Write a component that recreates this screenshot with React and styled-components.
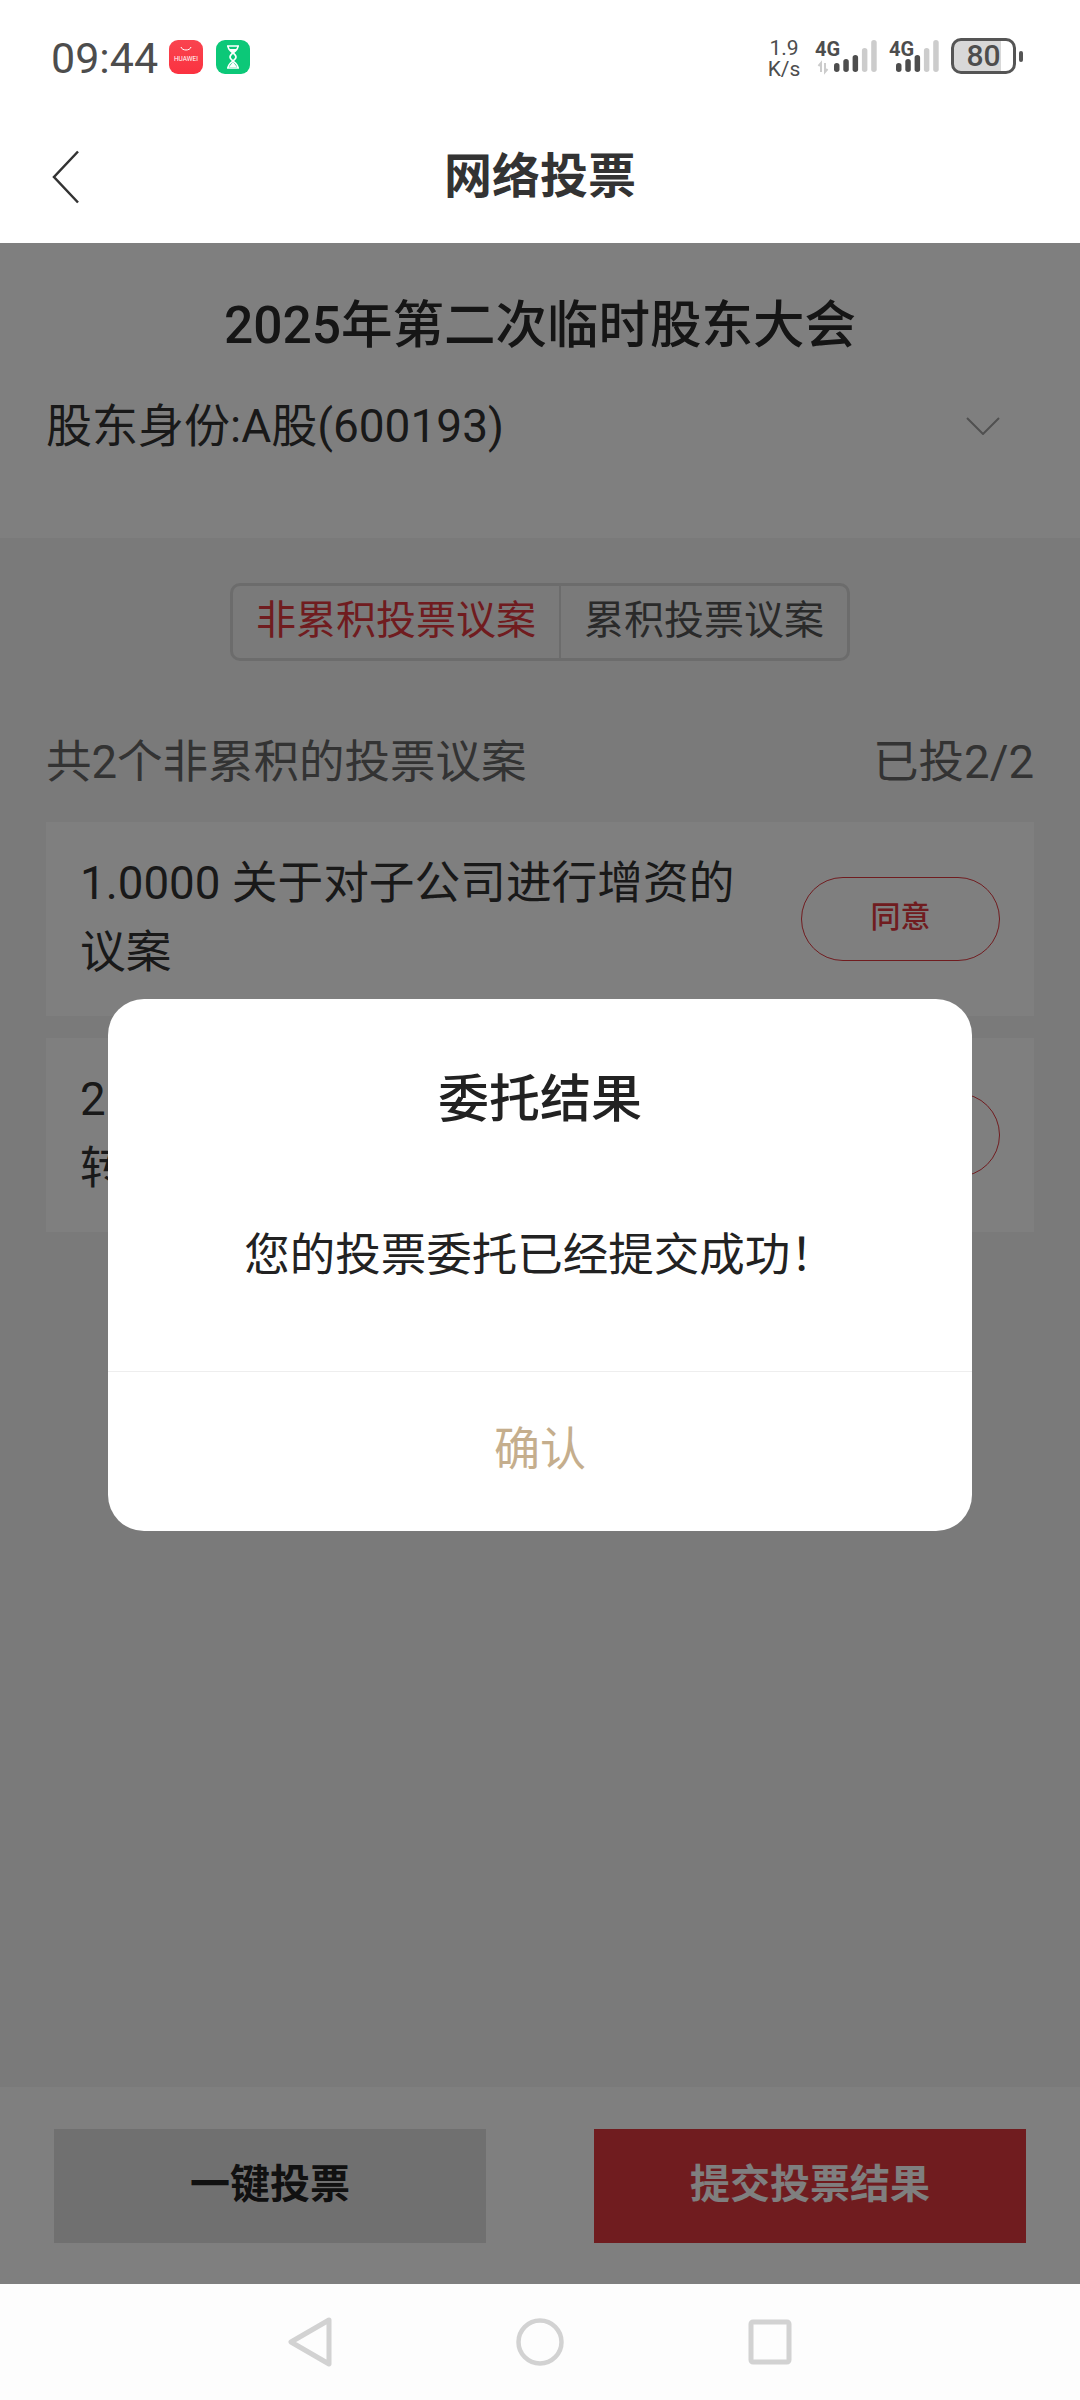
import React from 'react';
import styled, { createGlobalStyle } from 'styled-components';

const GlobalStyle = createGlobalStyle`
  html, body {
    margin: 0;
    padding: 0;
    background: #ffffff;
  }
  * {
    box-sizing: border-box;
  }
`;

const Page = styled.div`
  position: relative;
  width: 1080px;
  height: 2400px;
  display: flex;
  flex-direction: column;
  overflow: hidden;
  background: #f4f4f4;
  font-family: Roboto, "Noto Sans CJK SC", sans-serif;
  color: #333333;
`;

const StatusBar = styled.div`
  height: 92px;
  padding: 38px 64px 0 51px;
  display: flex;
  justify-content: space-between;
  align-items: flex-start;
  background: #ffffff;
`;

const StatusLeft = styled.div`
  display: flex;
  align-items: center;
  height: 40px;
`;

const Clock = styled.span`
  width: 118px;
  font-size: 43px;
  line-height: 40px;
  color: #4d4d4d;
`;

const AppBadge = styled.svg`
  width: 34px;
  height: 34px;
  margin: -3px 13px 0 0;
  display: block;
`;

const StatusRight = styled.div`
  display: flex;
  align-items: flex-start;
`;

const Speed = styled.div`
  width: 40px;
  font-size: 21px;
  line-height: 21px;
  color: #4d4d4d;
  text-align: center;
`;

const Signal = styled.svg`
  display: block;
  height: 40px;
  margin-left: ${props => props.$gap}px;
`;

const Battery = styled.div`
  position: relative;
  width: 65px;
  height: 36px;
  margin-left: 10px;
  border: 3px solid #555555;
  border-radius: 10px;
  background: linear-gradient(90deg, #d8d8d8 80%, #ffffff 80%);
  font-size: 30px;
  line-height: 30px;
  font-weight: 500;
  text-align: center;
  color: #4d4d4d;

  &::after {
    content: '';
    position: absolute;
    top: 10px;
    right: -10px;
    width: 4px;
    height: 11px;
    border-radius: 2px;
    background: #555555;
  }
`;

const Header = styled.div`
  height: 151px;
  padding: 19px 0 0 52px;
  display: flex;
  align-items: center;
  background: #ffffff;
`;

const BackIcon = styled.svg`
  width: 27px;
  height: 54px;
  display: block;
`;

const HeaderTitle = styled.h1`
  margin: 0 0 0 365px;
  font-size: 48px;
  line-height: 60px;
  font-weight: 700;
  color: #333333;
`;

const Meeting = styled.section`
  height: 295px;
  padding: 47px 46px 0;
  background: #ffffff;
`;

const MeetingTitle = styled.h2`
  margin: 0;
  font-size: 51.500px;
  line-height: 72px;
  font-weight: 500;
  text-align: center;
  color: #2a2a2a;
`;

const HolderRow = styled.div`
  margin-top: 34px;
  display: flex;
  justify-content: space-between;
  align-items: center;
  font-size: 46px;
  line-height: 60px;
  color: #333333;
`;

const ChevronDown = styled.svg`
  width: 34px;
  height: 18px;
  margin-right: 34px;
  display: block;
`;

const Proposals = styled.section`
  flex: 1;
  padding: 45px 46px 0;
  display: flex;
  flex-direction: column;
`;

const Tabs = styled.div`
  align-self: center;
  display: flex;
  height: 78px;
  border: 3px solid #d8d8d8;
  border-radius: 10px;
`;

const Tab = styled.div`
  padding: 0 23px;
  font-size: 40px;
  line-height: 70px;
  color: ${props => (props.$active ? '#e1383f' : '#555555')};
  border-left: ${props => (props.$active ? 'none' : '2px solid #d8d8d8')};
`;

const CountRow = styled.div`
  margin-top: 72px;
  display: flex;
  justify-content: space-between;
  font-size: 45.500px;
  line-height: 60px;
  color: #666666;
`;

const Card = styled.div`
  height: 194px;
  margin-top: ${props => (props.$first ? 29 : 22)}px;
  padding: 0 34px;
  display: flex;
  align-items: center;
  background: #ffffff;
`;

const CardText = styled.div`
  flex: 1;
  padding-bottom: 3px;
  font-size: 45.700px;
  line-height: 69px;
  color: #333333;
`;

const AgreeButton = styled.div`
  flex: none;
  width: 199px;
  height: 84px;
  margin-left: 40px;
  border: 1.5px solid #e1383f;
  border-radius: 42px;
  font-size: 30px;
  line-height: 78px;
  font-weight: 500;
  text-align: center;
  color: #e1383f;
`;

const BottomBar = styled.div`
  height: 197px;
  padding: 42px 54px 0;
  display: flex;
  justify-content: space-between;
  align-items: flex-start;
  background: #ffffff;
`;

const ActionButton = styled.div`
  width: 432px;
  height: 114px;
  font-size: 40px;
  line-height: 112px;
  font-weight: 700;
  text-align: center;
  background: ${props => (props.$primary ? '#e1383f' : '#e0e0e0')};
  color: ${props => (props.$primary ? '#ffffff' : '#222222')};
`;

const SystemNav = styled.div`
  height: 116px;
  padding-top: 33px;
  display: flex;
  justify-content: center;
  align-items: flex-start;
  gap: 182px;
  background: #fdfdfd;
`;

const NavIcon = styled.svg`
  width: 48px;
  height: 50px;
  display: block;
`;

const Overlay = styled.div`
  position: absolute;
  top: 243px;
  left: 0;
  right: 0;
  bottom: 116px;
  padding-top: 3px;
  display: flex;
  align-items: center;
  justify-content: center;
  background: rgba(0, 0, 0, 0.5);
`;

const Dialog = styled.div`
  width: 864px;
  height: 532px;
  display: flex;
  flex-direction: column;
  border-radius: 36px;
  background: #ffffff;
`;

const DialogTitle = styled.div`
  padding-top: 66px;
  font-size: 51px;
  line-height: 70px;
  font-weight: 500;
  text-align: center;
  color: #222222;
`;

const DialogBody = styled.div`
  flex: 1;
  padding-top: 91px;
  font-size: 45.500px;
  line-height: 60px;
  text-align: center;
  color: #222222;
  border-bottom: 1px solid #eeeeee;
`;

const DialogConfirm = styled.div`
  height: 159px;
  font-size: 46px;
  line-height: 155px;
  text-align: center;
  color: #c5ae8d;
`;

const barHeights = [9, 13, 17, 24, 32];

// the first SIM has the data arrows in front of its bars, the second has not
const SignalIcon = ({ gap, width, offset, arrows }) => (
  <Signal $gap={gap} width={width} viewBox={`0 0 ${width} 40`}>
    <text x="0" y="18" fontFamily="Roboto, sans-serif" fontSize="20" fontWeight="700" fill="#4d4d4d">4G</text>
    {arrows && <path d="M6 34v-9l-2.500 3M10 25v9l2.500-3" fill="none" stroke="#cccccc" strokeWidth="2" />}
    {barHeights.map((h, i) => (
      <rect
        key={h}
        x={offset + i * 9.300}
        y={34 - h}
        width="5.500"
        height={h}
        rx="2.750"
        fill={i < 3 ? '#4d4d4d' : '#cccccc'}
      />
    ))}
  </Signal>
);

export default function App() {
  return (
    <Page>
      <GlobalStyle />
      <StatusBar>
        <StatusLeft>
          <Clock>09:44</Clock>
          <AppBadge viewBox="0 0 34 34">
            <defs>
              <linearGradient id="huaweiRed" x1="0" y1="0" x2="0" y2="1">
                <stop offset="0" stopColor="#f9444f" />
                <stop offset="1" stopColor="#fb3240" />
              </linearGradient>
            </defs>
            <rect width="34" height="34" rx="9" fill="url(#huaweiRed)" />
            <path d="M12 7c1 4 9 4 10 0" fill="none" stroke="#ffffff" strokeWidth="1" />
            <text x="17" y="21" fontFamily="Roboto, sans-serif" fontSize="6.500" textAnchor="middle" fill="#ffffff">HUAWEI</text>
          </AppBadge>
          <AppBadge viewBox="0 0 34 34">
            <rect width="34" height="34" rx="9" fill="#0cc878" />
            <path d="M11 6h12M11 28h12M12 6c0 6 8 7 8 11s-8 5-8 11M22 6c0 6-8 7-8 11s8 5 8 11" fill="none" stroke="#ffffff" strokeWidth="1.600" />
            <path d="M13 9h8l-4 5zM13 27l4-5 4 5z" fill="#ffffff" />
          </AppBadge>
        </StatusLeft>
        <StatusRight>
          <Speed>1.9<br />K/s</Speed>
          <SignalIcon gap={11} width={66} offset={19} arrows />
          <SignalIcon gap={8} width={52} offset={7} />
          <Battery>80</Battery>
        </StatusRight>
      </StatusBar>

      <Header>
        <BackIcon viewBox="0 0 27 54">
          <path d="M26 1.500 2 27l24 25.500" fill="none" stroke="#333333" strokeWidth="2.500" />
        </BackIcon>
        <HeaderTitle>网络投票</HeaderTitle>
      </Header>

      <Meeting>
        <MeetingTitle>2025年第二次临时股东大会</MeetingTitle>
        <HolderRow>
          股东身份:A股(600193)
          <ChevronDown viewBox="0 0 34 18">
            <path d="M1 1l16 16L33 1" fill="none" stroke="#a0a0a0" strokeWidth="2" />
          </ChevronDown>
        </HolderRow>
      </Meeting>

      <Proposals>
        <Tabs>
          <Tab $active>非累积投票议案</Tab>
          <Tab>累积投票议案</Tab>
        </Tabs>
        <CountRow>
          <span>共2个非累积的投票议案</span>
          <span>已投2/2</span>
        </CountRow>
        <Card $first>
          <CardText>1.0000 关于对子公司进行增资的议案</CardText>
          <AgreeButton>同意</AgreeButton>
        </Card>
        <Card>
          <CardText>2.0000 关于全资子公司部分股权转让的议案</CardText>
          <AgreeButton>同意</AgreeButton>
        </Card>
      </Proposals>

      <BottomBar>
        <ActionButton>一键投票</ActionButton>
        <ActionButton $primary>提交投票结果</ActionButton>
      </BottomBar>

      <SystemNav>
        <NavIcon viewBox="0 0 48 50">
          <path d="M43 3 5 25l38 22z" fill="none" stroke="#d2d2d2" strokeWidth="5" strokeLinejoin="round" />
        </NavIcon>
        <NavIcon viewBox="0 0 48 50">
          <circle cx="24" cy="25" r="21.500" fill="none" stroke="#d2d2d2" strokeWidth="4.500" />
        </NavIcon>
        <NavIcon viewBox="0 0 48 50">
          <rect x="5" y="5" width="38" height="40" rx="2" fill="none" stroke="#d2d2d2" strokeWidth="5" />
        </NavIcon>
      </SystemNav>

      <Overlay>
        <Dialog>
          <DialogTitle>委托结果</DialogTitle>
          <DialogBody>您的投票委托已经提交成功！</DialogBody>
          <DialogConfirm>确认</DialogConfirm>
        </Dialog>
      </Overlay>
    </Page>
  );
}
